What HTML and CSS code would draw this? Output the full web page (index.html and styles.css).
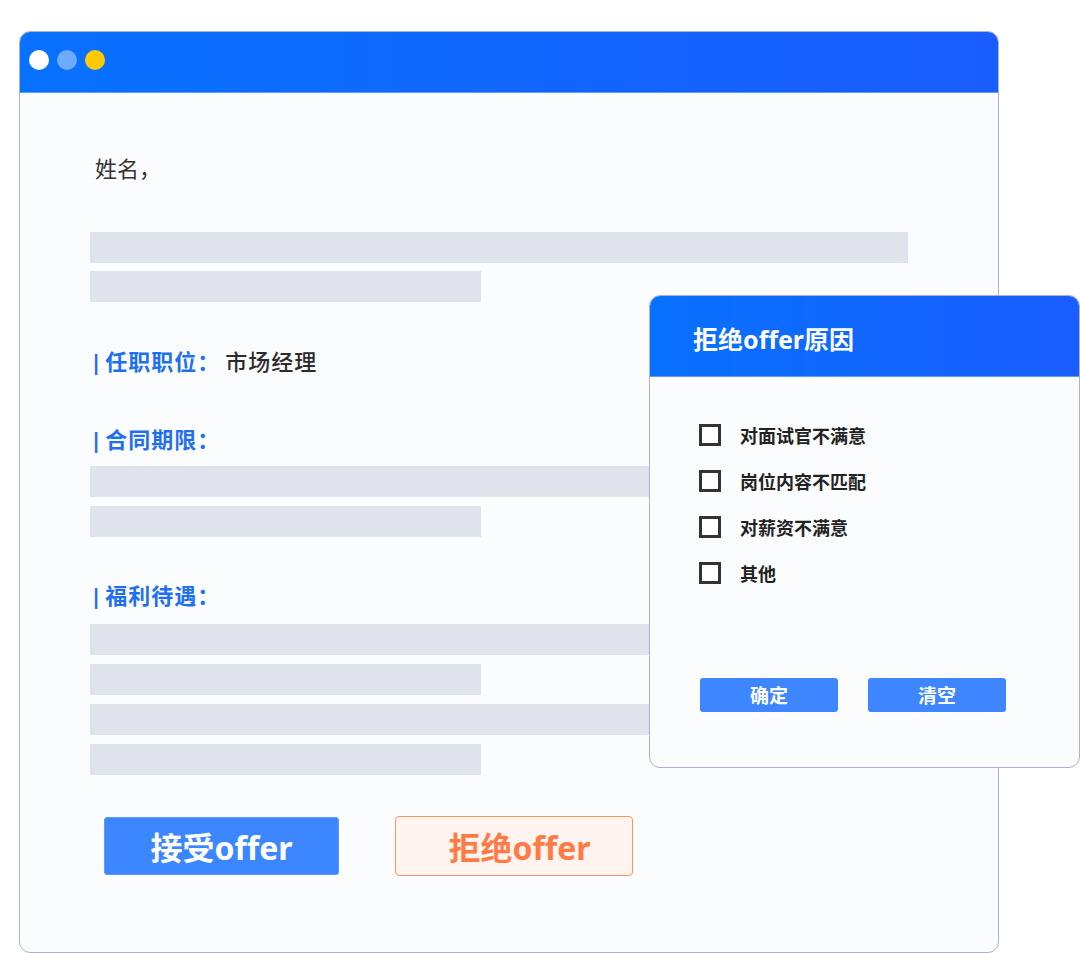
FILE: index.html
```html
<!DOCTYPE html>
<html lang="zh-CN">
<head>
<meta charset="utf-8">
<title>Offer</title>
<link rel="stylesheet" href="styles.css">
</head>
<body>
<div class="stage">
  <div class="window">
    <div class="titlebar">
      <span class="dot dot-white"></span>
      <span class="dot dot-blue"></span>
      <span class="dot dot-yellow"></span>
    </div>
    <div class="content">
      <p class="greeting">姓名，</p>
      <div class="bars bars-first">
        <div class="bar bar-long"></div>
        <div class="bar bar-short"></div>
      </div>
      <p class="label label-position"><span class="label-bar">|</span><span class="label-key">任职职位：</span><span class="label-value">市场经理</span></p>
      <p class="label label-contract"><span class="label-bar">|</span><span class="label-key">合同期限：</span></p>
      <div class="bars bars-tight">
        <div class="bar bar-long"></div>
        <div class="bar bar-short"></div>
      </div>
      <p class="label label-benefit"><span class="label-bar">|</span><span class="label-key">福利待遇：</span></p>
      <div class="bars bars-tight bars-benefit">
        <div class="bar bar-long"></div>
        <div class="bar bar-short"></div>
        <div class="bar bar-long"></div>
        <div class="bar bar-short"></div>
      </div>
      <div class="actions">
        <div class="btn btn-accept">接受offer</div>
        <div class="btn btn-reject">拒绝offer</div>
      </div>
    </div>
  </div>

  <div class="dialog">
    <div class="dialog-head">拒绝offer原因</div>
    <div class="dialog-body">
      <ul class="options">
        <li class="option"><span class="checkbox"></span><span class="option-text">对面试官不满意</span></li>
        <li class="option"><span class="checkbox"></span><span class="option-text">岗位内容不匹配</span></li>
        <li class="option"><span class="checkbox"></span><span class="option-text">对薪资不满意</span></li>
        <li class="option"><span class="checkbox"></span><span class="option-text">其他</span></li>
      </ul>
      <div class="dialog-actions">
        <div class="dbtn">确定</div>
        <div class="dbtn">清空</div>
      </div>
    </div>
  </div>
</div>
</body>
</html>
```

FILE: styles.css
```css
* { box-sizing: border-box; }
html, body {
  margin: 0;
  padding: 0;
  background: #ffffff;
  font-family: "Noto Sans", "Noto Sans CJK SC", sans-serif;
}
.stage {
  position: relative;
  width: 1080px;
  height: 953px;
  padding: 31px 0 0 19px;
}
.window {
  width: 980px;
  height: 922px;
  border: 1.5px solid #aab4c7;
  border-radius: 11px;
  background: #fbfcfe;
  overflow: hidden;
}
.titlebar {
  height: 61px;
  background: linear-gradient(90deg, #0871ff 0%, #1a5dff 100%);
  display: flex;
  align-items: center;
  gap: 8px;
  padding: 0 0 4px 9px;
  border-bottom: 1px solid #5a9cff;
}
.dot {
  width: 20px;
  height: 20px;
  border-radius: 50%;
}
.dot-white { background: #ffffff; }
.dot-blue { background: #6dabff; }
.dot-yellow { background: #ffcb00; }

.content {
  padding: 61px 0 0 70px;
  display: flex;
  flex-direction: column;
}
.greeting {
  margin: 0 0 0 5px;
  font-size: 22px;
  line-height: 28px;
  color: #333333;
}
.bars {
  display: flex;
  flex-direction: column;
  gap: 8px;
}
.bars-first { margin-top: 50px; }
.bars-tight { margin-top: 12px; gap: 9px; }
.bars-benefit { margin-top: 14px; }
.bar {
  height: 31px;
  background: #dfe3eb;
}
.bar-long { width: 818px; }
.bar-short { width: 391px; }

.label {
  margin: 0;
  font-size: 22px;
  line-height: 30px;
  font-weight: 700;
  letter-spacing: 1px;
}
.label-position { margin-top: 44px; }
.label-contract { margin-top: 48px; }
.label-benefit { margin-top: 43px; }
.label-bar {
  color: #1f6ff2;
  letter-spacing: 0;
  margin-right: 3px;
}
.label-key { color: #1f6ff2; }
.label-value { color: #2b2b2b; font-weight: 500; margin-left: 5px; }

.actions {
  margin: 41px 0 0 14px;
  display: flex;
  align-items: center;
  gap: 56px;
}
.btn {
  display: flex;
  align-items: center;
  justify-content: center;
  font-size: 32px;
  font-weight: 700;
  border-radius: 3px;
}
.btn-accept {
  width: 235px;
  height: 58px;
  background: #3c87ff;
  color: #ffffff;
  border: 1px solid #5c9bff;
}
.btn-reject {
  width: 238px;
  height: 60px;
  padding-left: 11px;
  background: #fff4ef;
  color: #ff7b45;
  border: 1.5px solid #ff9366;
  border-radius: 4px;
}

.dialog {
  position: absolute;
  left: 649px;
  top: 295px;
  width: 431px;
  height: 473px;
  border: 1.5px solid #aab4c7;
  border-radius: 11px;
  background: #fbfcfe;
  overflow: hidden;
}
.dialog-head {
  height: 81px;
  background: linear-gradient(90deg, #0871ff 0%, #1a5dff 100%);
  border-bottom: 1px solid #5a9cff;
  color: #ffffff;
  font-size: 25px;
  font-weight: 700;
  line-height: 32px;
  padding: 27px 0 0 43px;
}
.dialog-body {
  padding: 47px 0 0 49px;
}
.options {
  list-style: none;
  margin: 0;
  padding: 0;
  display: flex;
  flex-direction: column;
  gap: 24px;
}
.option {
  display: flex;
  align-items: center;
  gap: 19px;
  height: 22px;
}
.checkbox {
  width: 22px;
  height: 22px;
  border: 3px solid #333333;
  background: #ffffff;
}
.option-text {
  font-size: 18px;
  font-weight: 700;
  color: #222222;
}
.dialog-actions {
  margin-top: 94px;
  display: flex;
  gap: 30px;
  padding-left: 1px;
}
.dbtn {
  width: 138px;
  height: 34px;
  background: #3d86ff;
  border-radius: 3px;
  color: #ffffff;
  font-size: 19px;
  font-weight: 700;
  display: flex;
  align-items: center;
  justify-content: center;
}
```
